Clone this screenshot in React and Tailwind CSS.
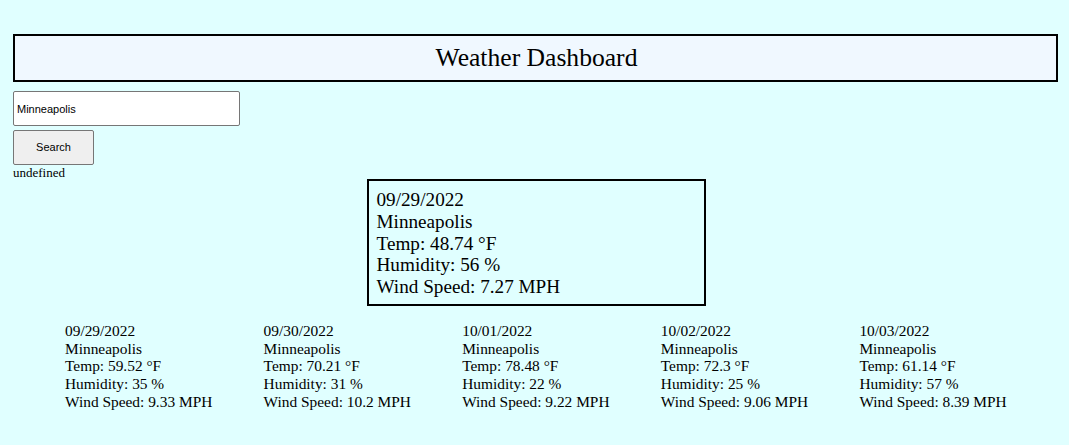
import React from "react";

const current = {
  date: "09/29/2022",
  city: "Minneapolis",
  temp: "48.74",
  humidity: "56",
  wind: "7.27",
};

const forecast = [
  { date: "09/29/2022", temp: "59.52", humidity: "35", wind: "9.33" },
  { date: "09/30/2022", temp: "70.21", humidity: "31", wind: "10.2" },
  { date: "10/01/2022", temp: "78.48", humidity: "22", wind: "9.22" },
  { date: "10/02/2022", temp: "72.3", humidity: "25", wind: "9.06" },
  { date: "10/03/2022", temp: "61.14", humidity: "57", wind: "8.39" },
];

export default function App() {
  return (
    <div className="min-h-[445px] w-full bg-[#e0ffff] pl-[13px] pr-[11px] pt-[34px] pb-8 font-['Liberation_Serif',serif] text-black">
      <header className="h-[48px] border-2 border-black bg-[#f0f8ff] flex items-center justify-center">
        <h1 className="ml-[2px] text-[25.6px] leading-none">Weather Dashboard</h1>
      </header>

      <div className="mt-[9px] flex flex-col items-start">
        <input
          type="text"
          defaultValue="Minneapolis"
          className="w-[227px] h-[35px] bg-white border border-[#767676] rounded-[2px] px-[3px] text-[11px] font-['Liberation_Sans',Arial,sans-serif] outline-none"
        />
        <button className="mt-[4px] w-[81px] h-[35px] bg-[#efefef] border border-[#767676] rounded-[2px] text-[11px] font-['Liberation_Sans',Arial,sans-serif]">
          Search
        </button>
        <p className="text-[13px] leading-[15px]">undefined</p>
      </div>

      <div className="mt-[-1px] flex justify-center">
        <div className="ml-[1px] w-[339px] border-2 border-black px-[8px] pt-[8px] pb-[6px] text-[19.2px] leading-[21.75px]">
          <p>{current.date}</p>
          <p>{current.city}</p>
          <p>Temp: {current.temp} °F</p>
          <p>Humidity: {current.humidity} %</p>
          <p>Wind Speed: {current.wind} MPH</p>
        </div>
      </div>

      <div className="mt-[16px] pl-[52px] flex text-[15.4px] leading-[17.75px]">
        {forecast.map((d) => (
          <div key={d.date} className="w-[199px]">
            <p>{d.date}</p>
            <p>Minneapolis</p>
            <p>Temp: {d.temp} °F</p>
            <p>Humidity: {d.humidity} %</p>
            <p>Wind Speed: {d.wind} MPH</p>
          </div>
        ))}
      </div>
    </div>
  );
}
